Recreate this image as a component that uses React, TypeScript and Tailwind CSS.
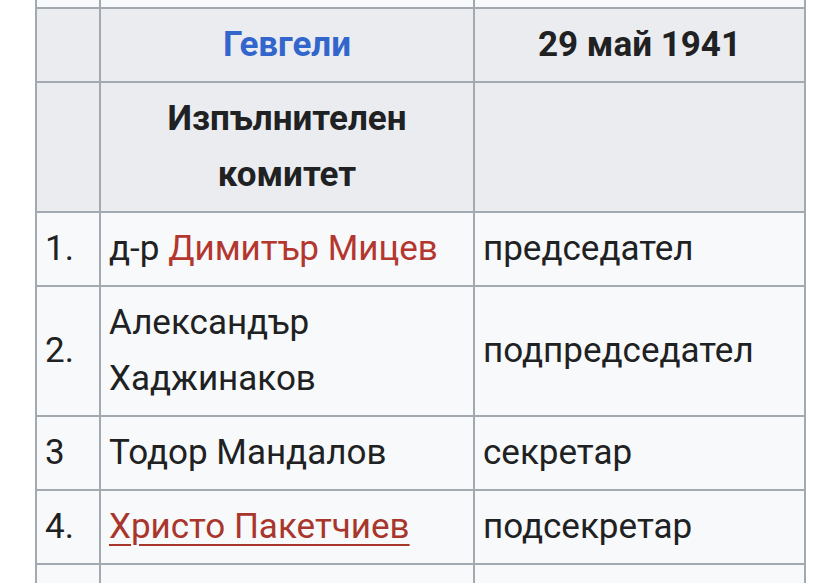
import React from 'react';

const cell = 'border-2 border-[#a2a9b1] px-2 py-2 align-middle';

type Row = { n: string; pre?: string; name: string; link?: 'red' | 'redu'; role: string };

const rows: Row[] = [
  { n: '1.', pre: 'д-р ', name: 'Димитър Мицев', link: 'red', role: 'председател' },
  { n: '2.', name: 'Александър Хаджинаков', role: 'подпредседател' },
  { n: '3', name: 'Тодор Мандалов', role: 'секретар' },
  { n: '4.', name: 'Христо Пакетчиев', link: 'redu', role: 'подсекретар' },
];

export default function App() {
  return (
    <div
      className="w-[840px] h-[583px] overflow-hidden bg-white text-[#202122] text-[35px] leading-[56px]"
      style={{ fontFamily: 'Roboto, "Noto Sans", sans-serif' }}
    >
      <table className="ml-[35px] w-[769px] table-fixed border-collapse">
        <colgroup>
          <col className="w-[64px]" />
          <col className="w-[374px]" />
          <col className="w-[331px]" />
        </colgroup>
        <tbody>
          <tr className="bg-[#f8f9fa] h-[8px]">
            <td className="border-x-2 border-b-2 border-[#a2a9b1] p-0 leading-none" />
            <td className="border-x-2 border-b-2 border-[#a2a9b1] p-0 leading-none" />
            <td className="border-x-2 border-b-2 border-[#a2a9b1] p-0 leading-none" />
          </tr>
          <tr className="bg-[#eaecf0]">
            <th className={cell} />
            <th className={`${cell} text-center font-bold text-[#3366cc]`}>Гевгели</th>
            <th className={`${cell} text-center font-bold`}>29 май 1941</th>
          </tr>
          <tr className="bg-[#eaecf0]">
            <th className={cell} />
            <th className={`${cell} text-center font-bold`}>
              Изпълнителен
              <br />
              комитет
            </th>
            <th className={cell} />
          </tr>
          {rows.map((r) => (
            <tr key={r.n} className="bg-[#f8f9fa]">
              <td className={cell}>{r.n}</td>
              <td className={cell}>
                {r.pre}
                {r.link === 'red' && <span className="text-[#b3372e]">{r.name}</span>}
                {r.link === 'redu' && (
                  <span className="text-[#a8362d] underline decoration-2 underline-offset-[6px]">{r.name}</span>
                )}
                {!r.link && r.name}
              </td>
              <td className={cell}>{r.role}</td>
            </tr>
          ))}
          <tr className="bg-[#f8f9fa]">
            <td className={cell}>&nbsp;</td>
            <td className={cell} />
            <td className={cell} />
          </tr>
        </tbody>
      </table>
    </div>
  );
}
